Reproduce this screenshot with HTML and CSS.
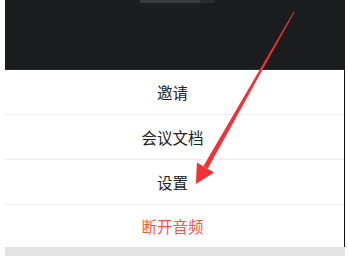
FILE: index.html
```html
<!DOCTYPE html>
<html>
<head>
  <title>Meeting Menu</title>
  <link rel="stylesheet" href="styles.css">
</head>
<body>
  <div class="screen">
    <div class="video-area">
      <div class="handle"><span class="handle-light"></span><span class="handle-dark"></span></div>
    </div>
    <div class="menu">
      <div class="menu-item">邀请</div>
      <div class="menu-item">会议文档</div>
      <div class="menu-item">设置</div>
      <div class="menu-item danger">断开音频</div>
    </div>
    <div class="menu-footer"></div>
  </div>

  <!-- annotation arrow drawn over the screenshot -->
  <svg class="arrow" width="348" height="263" viewBox="0 0 348 263">
    <polygon points="294.4,12.3 293.6,11.7 203.3,166.2 207.7,168.8" fill="#ee3338"/>
    <polygon points="196.9,162.4 214.1,172.5 195.9,183.9" fill="#ee3338"/>
  </svg>
</body>
</html>
```

FILE: styles.css
```css
body {
  margin: 0;
  background-color: #fff;
  font-family: "Noto Sans CJK SC", "Noto Sans", sans-serif;
  position: relative;
  width: 348px;
  height: 263px;
  overflow: hidden;
}

.screen {
  margin-left: 5px;
  width: 340px;
}

.video-area {
  height: 70px;
  background-color: #1b1c1e;
  border-bottom: 1px solid #2a2a2c;
  box-sizing: border-box;
}

.handle {
  display: flex;
  margin-left: 135px;
  height: 3px;
}

.handle-light {
  width: 60px;
  background-color: #3a3a3d;
}

.handle-dark {
  width: 15px;
  background-color: #2b2b2e;
}

.menu {
  border-right: 1px solid #111;
}

.menu-item {
  height: 44px;
  display: flex;
  align-items: center;
  justify-content: center;
  padding-right: 4px;
  font-size: 15.5px;
  color: #222;
  border-top: 1px solid #ededed;
}

.menu-item:first-child {
  border-top: none;
}

.menu-item.danger {
  height: 42px;
  color: #f25a45;
}

.menu-footer {
  height: 9px;
  background-color: #e3e3e3;
}

.arrow {
  position: absolute;
  top: 0;
  left: 0;
}
```
